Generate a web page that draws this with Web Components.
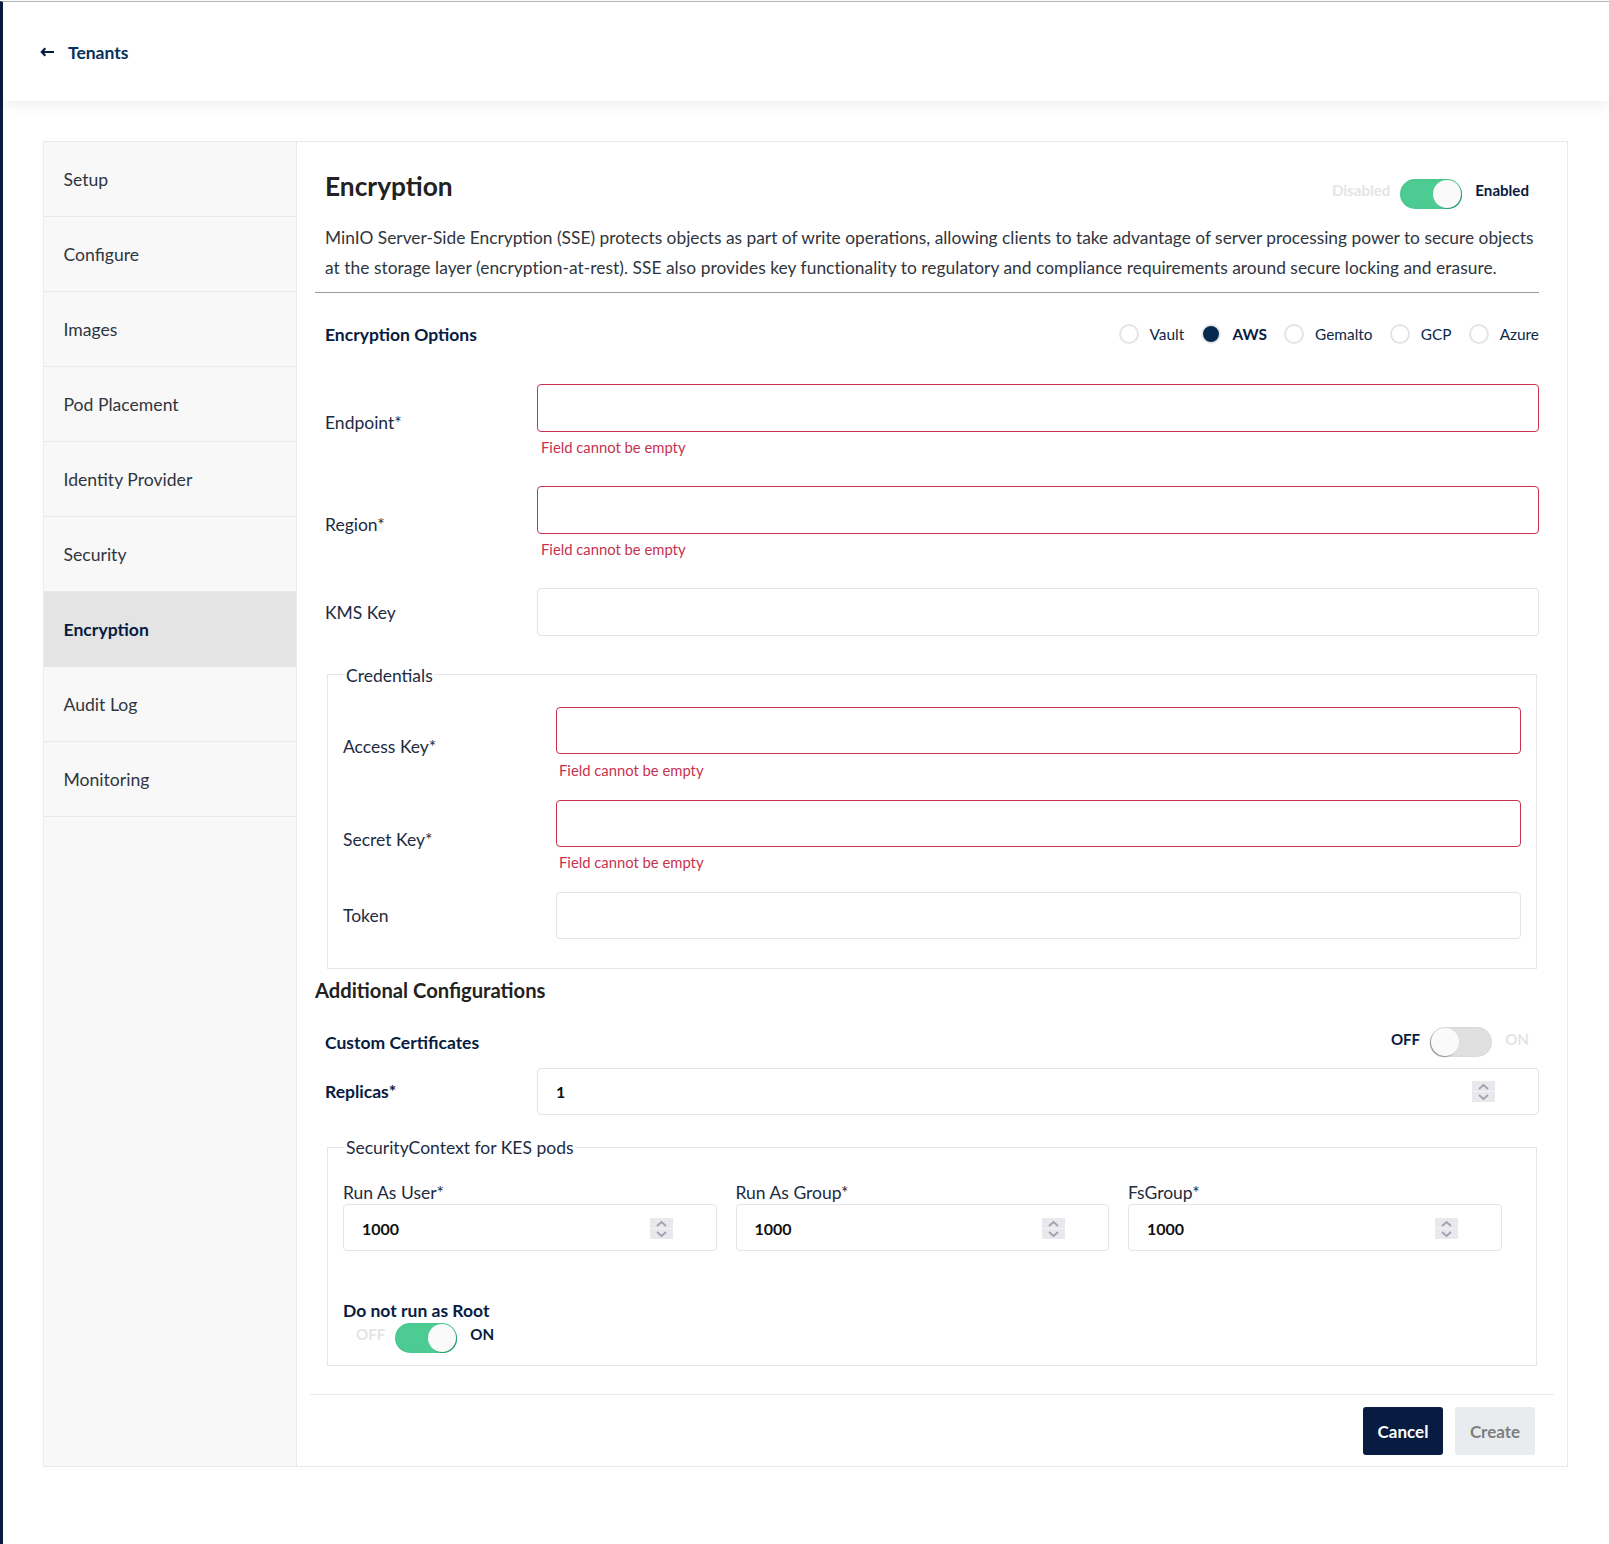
<!DOCTYPE html>
<html><head><meta charset="utf-8"><title>Tenants</title>
<style>
html,body{margin:0;padding:0;background:#fff;font-family:Lato,"Liberation Sans",sans-serif;color:#393939}
</style></head>
<body>
<app-shell>
  <page-header slot="header">Tenants</page-header>
  <side-nav slot="nav" active="Encryption" items="Setup|Configure|Images|Pod Placement|Identity Provider|Security|Encryption|Audit Log|Monitoring"></side-nav>
  <encryption-panel slot="main"></encryption-panel>
</app-shell>
<script>
const def=(name,css,html)=>{
  customElements.define(name,class extends HTMLElement{
    connectedCallback(){
      if(this.shadowRoot)return;
      const r=this.attachShadow({mode:'open'});
      r.innerHTML=`<style>${css}</style>`+(typeof html==='function'?html(this):html);
    }
  });
};
def('app-shell',`
:host{display:block;box-sizing:border-box;margin-top:1px;height:1543px;border-top:1px solid #bbb;border-left:3px solid #081c42;background:#fff}
.main{display:flex;margin:40px 41px 0 40px;border:1px solid #eaeaea;height:1326px;box-sizing:border-box}
.nav{flex:0 0 252px;background:#f8f8f8;border-right:1px solid #eaeaea}
.content{flex:1;min-width:0}
`,`<slot name="header"></slot><div class="main"><div class="nav"><slot name="nav"></slot></div><div class="content"><slot name="main"></slot></div></div>`);
def('page-header',`
:host{display:flex;align-items:center;box-sizing:border-box;height:99px;padding-top:1px;background:#fff;box-shadow:0 3px 14px rgba(0,0,0,.07);padding-left:36px;font:700 17.5px Lato,sans-serif;color:#06315a}
svg{width:16px;height:12px;margin-right:13px}
`,`<svg viewBox="0 0 16 12"><path d="M15 6H3.500M6.300 2.300 2.800 6l3.500 3.700" fill="none" stroke="#081c42" stroke-width="2.200"/></svg><slot></slot>`);
def('side-nav',`
:host{display:block}
a{display:flex;align-items:center;height:74px;padding-left:19.5px;border-bottom:1px solid #eaeaea;font:400 17.6px Lato,sans-serif;color:#2f3640}
a.on{background:#e4e4e4;font-weight:700;color:#081c42;border-bottom-color:#e4e4e4}
`,el=>el.getAttribute('items').split('|').map(t=>`<a class="${t===el.getAttribute('active')?'on':''}">${t}</a>`).join(''));
def('toggle-switch',`
:host{display:inline-flex;align-items:center;font:700 15.1px Lato,sans-serif;color:#081c42}
.off{color:#e4e4e7}
.t{position:relative;width:62px;height:30px;border-radius:15px;background:#e0e0e0;margin:0 10px 0 10px;box-shadow:inset 0 0 3px rgba(0,0,0,.06)}
.k{position:absolute;top:1px;left:1px;width:28px;height:28px;border-radius:50%;background:#fafafa;box-shadow:-1px 1px 1px rgba(0,0,0,.35)}
:host([on]) .t{background:#4ccb92}
:host([on]) .k{left:33px;box-shadow:1px 1px 0 #2f9e6d}
.a,.b{position:relative;top:-3px}
:host([on]) .a,:host([on]) .b{top:-4px}
`,el=>{const on=el.hasAttribute('on');return `<span class="a ${on?'off':''}">${el.getAttribute('a')}</span><span class="t"><span class="k"></span></span><span class="b ${on?'':'off'}" style="margin-left:3px">${el.getAttribute('b')}</span>`});
def('radio-option',`
:host{display:inline-flex;align-items:center;font:400 15.4px Lato,sans-serif;color:#0b2a4a}
i{box-sizing:border-box;width:20px;height:20px;border-radius:50%;border:2px solid #e4e4e4;margin-right:11px;background:#fff}
:host([on]){font-weight:700;color:#081c42}
:host([on]) i{background:#06294e;border:2px solid #e8e8e8}
`,`<i></i><slot></slot>`);
def('text-field',`
:host{display:flex;align-items:flex-start;font:400 17.5px Lato,sans-serif;color:#1d2b42}
.l{flex:0 0 var(--label,212px);align-self:center}
.b{flex:1;min-width:0}
.box{box-sizing:border-box;height:var(--h,48px);border:1px solid #e4e4e7;border-radius:4px;background:#fff;display:flex;align-items:center;padding-left:18px;padding-right:43px;padding-top:var(--pt,0);font-weight:700;font-size:16px;color:#111}
:host([error]) .box{border-color:#c9314f}
.e{color:#c8324f;font-size:14.8px;height:var(--eh,28px);line-height:var(--el,31px);padding-left:var(--ep,4px);font-weight:400}
input{all:unset;flex:1;min-width:0}
span.v{flex:1}
svg{display:block}
`,el=>{const v=el.getAttribute('value');return `<div class="l">${el.getAttribute('label')}</div><div class="b"><div class="box">${v?`<span class="v">${v}</span><svg width="23" height="21" viewBox="0 0 23 21"><rect width="23" height="10" fill="#e8e8ed"/><rect y="10.5" width="23" height="10.5" fill="#e8e8ed"/><path d="M7 8 11.5 4l4.500 4M7 14l4.500 4 4.500-4" fill="none" stroke="#a0a0ae" stroke-width="1.700"/></svg>`:`<input aria-label="${el.getAttribute('label')}">`}</div>${el.hasAttribute('error')?`<div class="e">Field cannot be empty</div>`:''}</div>`});
def('field-box',`
:host{display:block}
fieldset{margin:0;border:1px solid #e6e6e6;padding:0 15px;box-sizing:border-box;min-width:0}
legend{margin-left:2px;padding:0 1px;font:400 17.5px/21px Lato,sans-serif;color:#1d2b42}
legend span{position:relative;top:var(--lt,0)}
`,el=>`<fieldset><legend><span>${el.getAttribute('legend')}</span></legend><slot></slot></fieldset>`);
def('action-button',`
:host{display:inline-flex;align-items:center;justify-content:center;width:80px;height:48px;border-radius:3px;font:700 17px Lato,sans-serif;background:#081c42;color:#fff}
:host([disabled]){background:#e9ecee;color:#7e7e7e}
`,`<slot></slot>`);
def('encryption-panel',`
:host{display:block;padding:30px 28px 0 18px;font:400 17.5px Lato,sans-serif;color:#1d2b42}
.head{display:flex;justify-content:space-between;height:30px;margin:0 10px 0 10px}
.head toggle-switch{position:relative;top:7px}
h1{margin:0;font:700 26.3px/28px Lato,sans-serif;color:#222}
p{margin:21px 0 0 10px;font-size:17.35px;line-height:30px;color:#2f3640}
p span{letter-spacing:.04px}
hr{margin:9px 0 0;border:0;border-top:1px solid #9b9b9b}
.opts{display:flex;justify-content:space-between;align-items:center;height:48px;margin:17px 0 0 10px}
.opts b{font-weight:700;color:#081c42;font-size:17.5px}
.opts div{display:flex;gap:17.2px}
.f{margin-left:10px}
h2{margin:0;font:700 20.2px/26px Lato,sans-serif;color:#222}
.g{display:grid;grid-template-columns:373.5px 373.5px 373.5px;gap:19px}
.lab{font-size:17.5px;line-height:22px;margin-bottom:1px;position:relative;top:1px}
.bold{font-weight:700;color:#081c42;font-size:17.5px}
.foot{display:flex;justify-content:flex-end;gap:12px;margin:28px -15px 0 -5px;padding:12px 19px 0 0;border-top:1px solid #eaeaea}
.tog{display:flex;justify-content:space-between;align-items:center}
`,`
<div class="head"><h1>Encryption</h1><toggle-switch on a="Disabled" b="Enabled"></toggle-switch></div>
<p>MinIO Server-Side Encryption (SSE) protects objects as part of write operations, allowing clients to take advantage of server processing power to secure objects <span>at the storage layer (encryption-at-rest). SSE also provides key functionality to regulatory and compliance requirements around secure locking and erasure.</span></p>
<hr>
<div class="opts"><b>Encryption Options</b><div>
<radio-option>Vault</radio-option><radio-option on>AWS</radio-option><radio-option>Gemalto</radio-option><radio-option>GCP</radio-option><radio-option>Azure</radio-option></div></div>
<text-field class="f" style="margin-top:26px" label="Endpoint*" error></text-field>
<text-field class="f" style="margin-top:26px" label="Region*" error></text-field>
<text-field class="f" style="margin-top:26px" label="KMS Key"></text-field>
<field-box style="margin:28px 2px 0 12px;--lt:1px" legend="Credentials">
  <text-field style="--label:213px;--h:47px;--eh:31px;--el:33px;--ep:3px;margin-top:22px" label="Access Key*" error></text-field>
  <text-field style="--label:213px;--h:47px;--eh:31px;--el:31px;--ep:3px;margin-top:15px" label="Secret Key*" error></text-field>
  <text-field style="--label:213px;--h:47px;margin:14px 0 29px" label="Token"></text-field>
</field-box>
<h2 style="margin-top:8px">Additional Configurations</h2>
<div class="tog" style="margin:24px 10px 0 10px;height:30px"><span class="bold">Custom Certificates</span><toggle-switch a="OFF" b="ON"></toggle-switch></div>
<text-field class="f" style="margin-top:11px;--h:47px" label="<b style='color:#081c42'>Replicas*</b>" value="1"></text-field>
<field-box style="margin:22px 2px 0 12px" legend="SecurityContext for KES pods">
  <div class="g" style="margin-top:23px">
    <div><div class="lab">Run As User*</div><text-field style="--label:0px;--h:47px;--pt:2px" label="" value="1000"></text-field></div>
    <div><div class="lab">Run As Group*</div><text-field style="--label:0px;--h:47px;--pt:2px" label="" value="1000"></text-field></div>
    <div><div class="lab">FsGroup*</div><text-field style="--label:0px;--h:47px;--pt:2px" label="" value="1000"></text-field></div>
  </div>
  <div class="bold" style="margin-top:49px;line-height:22px">Do not run as Root</div>
  <toggle-switch on a="OFF" b="ON" style="margin:1px 0 12px 13px"></toggle-switch>
</field-box>
<div class="foot"><action-button>Cancel</action-button><action-button disabled>Create</action-button></div>
`);
</script>
</body></html>
